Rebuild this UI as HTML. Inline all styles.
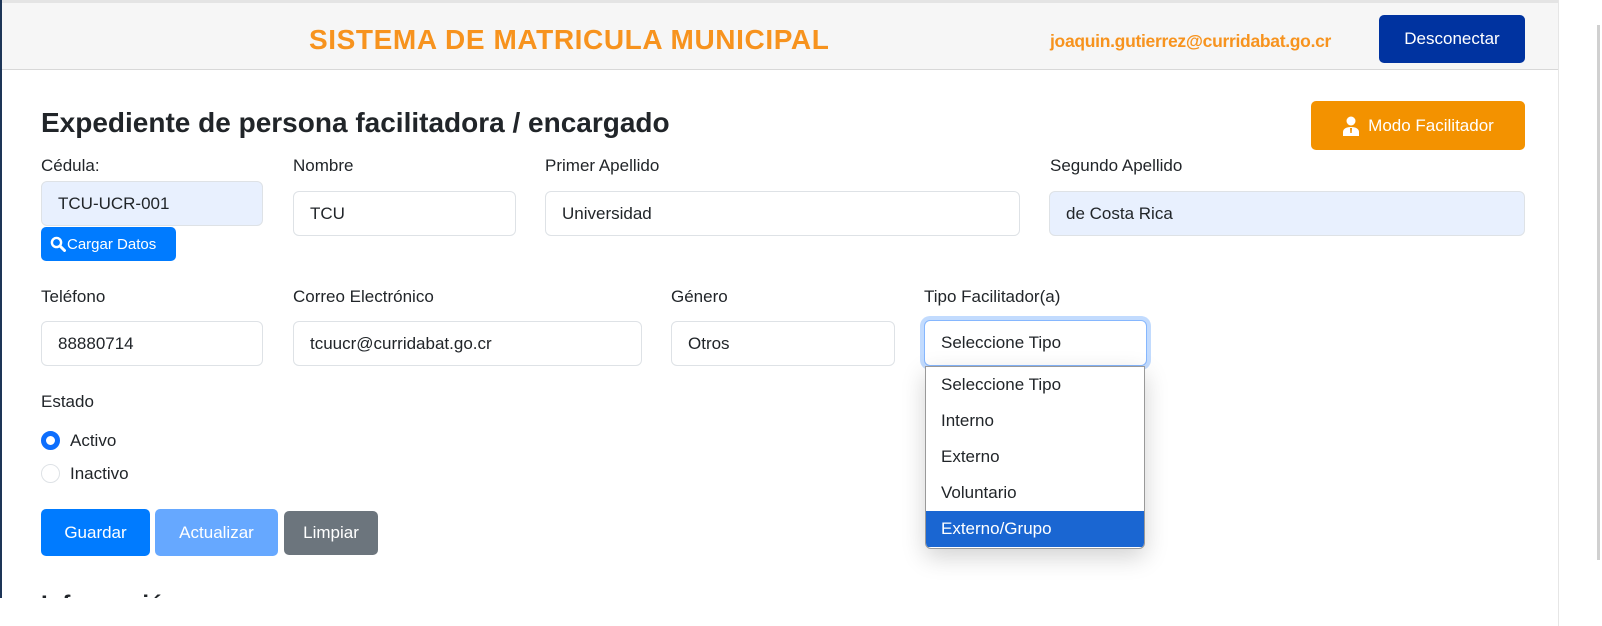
<!DOCTYPE html>
<html><head><meta charset="utf-8"><style>
*{box-sizing:border-box;margin:0;padding:0}
body{width:1602px;height:626px;background:#fff;position:relative;overflow:hidden;font-family:"Liberation Sans",sans-serif;color:#212529;font-size:16px}
.a{position:absolute}
.lbl{position:absolute;font-size:16px;color:#212529;line-height:20px}
.inp{position:absolute;border:1px solid #dee2e6;border-radius:6px;background:#fff;font-size:16px;padding-left:16px;display:flex;align-items:center}
.btn{position:absolute;color:#fff;border-radius:5px;display:flex;align-items:center;justify-content:center;font-size:16px}
.opt{height:36px;padding-left:15px;display:flex;align-items:center;font-size:16px}
</style></head><body>
<div class="a" style="left:0;top:0;width:1558px;height:3px;background:#e4e4e4"></div>
<div class="a" style="left:0;top:3px;width:1558px;height:67px;background:#f6f6f6;border-bottom:1px solid #d8d8d8"></div>
<div class="a" style="left:0;top:0;width:2px;height:598px;background:#1d3557"></div>
<div class="a" style="left:1558px;top:0;width:44px;height:626px;background:#fff;border-left:1px solid #e6e6e6"></div>
<div class="a" style="left:1597px;top:25px;width:3px;height:535px;background:#d0d0d0"></div>
<div class="a" style="left:309px;top:23px;font-size:28px;font-weight:bold;color:#f7931e;line-height:34px;white-space:nowrap;letter-spacing:0.6px">SISTEMA DE MATRICULA MUNICIPAL</div>
<div class="a" style="left:1050px;top:31px;font-size:17.5px;font-weight:bold;color:#f7931e;white-space:nowrap;letter-spacing:-0.3px">joaquin.gutierrez@curridabat.go.cr</div>
<div class="btn" style="left:1379px;top:15px;width:146px;height:48px;background:#0033a0;font-size:17px">Desconectar</div>
<div class="a" style="left:41px;top:106px;font-size:28px;font-weight:bold;line-height:34px;white-space:nowrap;letter-spacing:0px">Expediente de persona facilitadora / encargado</div>
<div class="btn" style="left:1311px;top:101px;width:214px;height:49px;background:#f39200;font-size:17px">
<svg width="18" height="20" viewBox="0 0 18 20" style="margin-right:8px"><circle cx="9" cy="5" r="4.5" fill="#fff"/><path d="M1 20v-4c0-3 3-5 8-5s8 2 8 5v4z" fill="#fff"/><path d="M8 12h2l-.3 5h-1.4z" fill="#f39200"/></svg>Modo Facilitador</div>
<div class="lbl" style="left:41px;top:156px;font-size:17px">Cédula:</div>
<div class="lbl" style="left:293px;top:156px;font-size:17px">Nombre</div>
<div class="lbl" style="left:545px;top:156px;font-size:17px">Primer Apellido</div>
<div class="lbl" style="left:1050px;top:156px;font-size:17px">Segundo Apellido</div>
<div class="inp" style="left:41px;top:181px;width:222px;height:45px;background:#e8f0fe;font-size:17px">TCU-UCR-001</div>
<div class="btn" style="left:41px;top:227px;width:135px;height:34px;background:#007bff;font-size:15px;justify-content:flex-start;padding-left:9px">
<svg width="16" height="16" viewBox="0 0 16 16" style="margin-right:1px"><circle cx="6.5" cy="6.5" r="4.6" fill="none" stroke="#fff" stroke-width="2.4"/><path d="M10 10l4.5 4.5" stroke="#fff" stroke-width="3" stroke-linecap="round"/></svg>Cargar Datos</div>
<div class="inp" style="left:293px;top:191px;width:223px;height:45px;font-size:17px">TCU</div>
<div class="inp" style="left:545px;top:191px;width:475px;height:45px;font-size:17px">Universidad</div>
<div class="inp" style="left:1049px;top:191px;width:476px;height:45px;background:#e8f0fe;font-size:17px">de Costa Rica</div>
<div class="lbl" style="left:41px;top:287px;font-size:17px">Teléfono</div>
<div class="lbl" style="left:293px;top:287px;font-size:17px">Correo Electrónico</div>
<div class="lbl" style="left:671px;top:287px;font-size:17px">Género</div>
<div class="lbl" style="left:924px;top:287px;font-size:17px">Tipo Facilitador(a)</div>
<div class="inp" style="left:41px;top:321px;width:222px;height:45px;font-size:17px">88880714</div>
<div class="inp" style="left:293px;top:321px;width:349px;height:45px;font-size:17px">tcuucr@curridabat.go.cr</div>
<div class="inp" style="left:671px;top:321px;width:224px;height:45px;font-size:17px">Otros</div>
<div class="inp" style="left:924px;top:320px;width:223px;height:46px;border:1px solid #86b7fe;box-shadow:0 0 0 4px #c2dbfe;font-size:17px">Seleccione Tipo</div>
<div class="a" style="left:925px;top:366px;width:220px;height:183px;background:#fff;border:1px solid #999;border-radius:0 0 6px 6px;overflow:hidden;box-shadow:0 8px 24px rgba(0,0,0,.18)">
<div class="opt" style="font-size:17px">Seleccione Tipo</div><div class="opt" style="font-size:17px">Interno</div><div class="opt" style="font-size:17px">Externo</div><div class="opt" style="font-size:17px">Voluntario</div><div class="opt" style="background:#1a66d2;color:#fff;font-size:17px">Externo/Grupo</div></div>
<div class="lbl" style="left:41px;top:392px;font-size:17px">Estado</div>
<div class="a" style="left:41px;top:431px;width:19px;height:19px;border-radius:50%;border:5px solid #0d6efd;background:#fff"></div>
<div class="lbl" style="left:70px;top:431px;font-size:17px">Activo</div>
<div class="a" style="left:41px;top:464px;width:19px;height:19px;border-radius:50%;border:1px solid #dee2e6"></div>
<div class="lbl" style="left:70px;top:464px;font-size:17px">Inactivo</div>
<div class="btn" style="left:41px;top:509px;width:109px;height:47px;background:#007bff;font-size:17px">Guardar</div>
<div class="btn" style="left:155px;top:509px;width:123px;height:47px;background:#66a8ff;font-size:17px">Actualizar</div>
<div class="btn" style="left:284px;top:511px;width:94px;height:44px;background:#6c757d;font-size:17px">Limpiar</div>
<div class="a" style="left:41px;top:591px;width:200px;height:7px;overflow:hidden"><div style="font-size:24px;font-weight:bold;line-height:24px;margin-top:2px">Información</div></div>
</body></html>
